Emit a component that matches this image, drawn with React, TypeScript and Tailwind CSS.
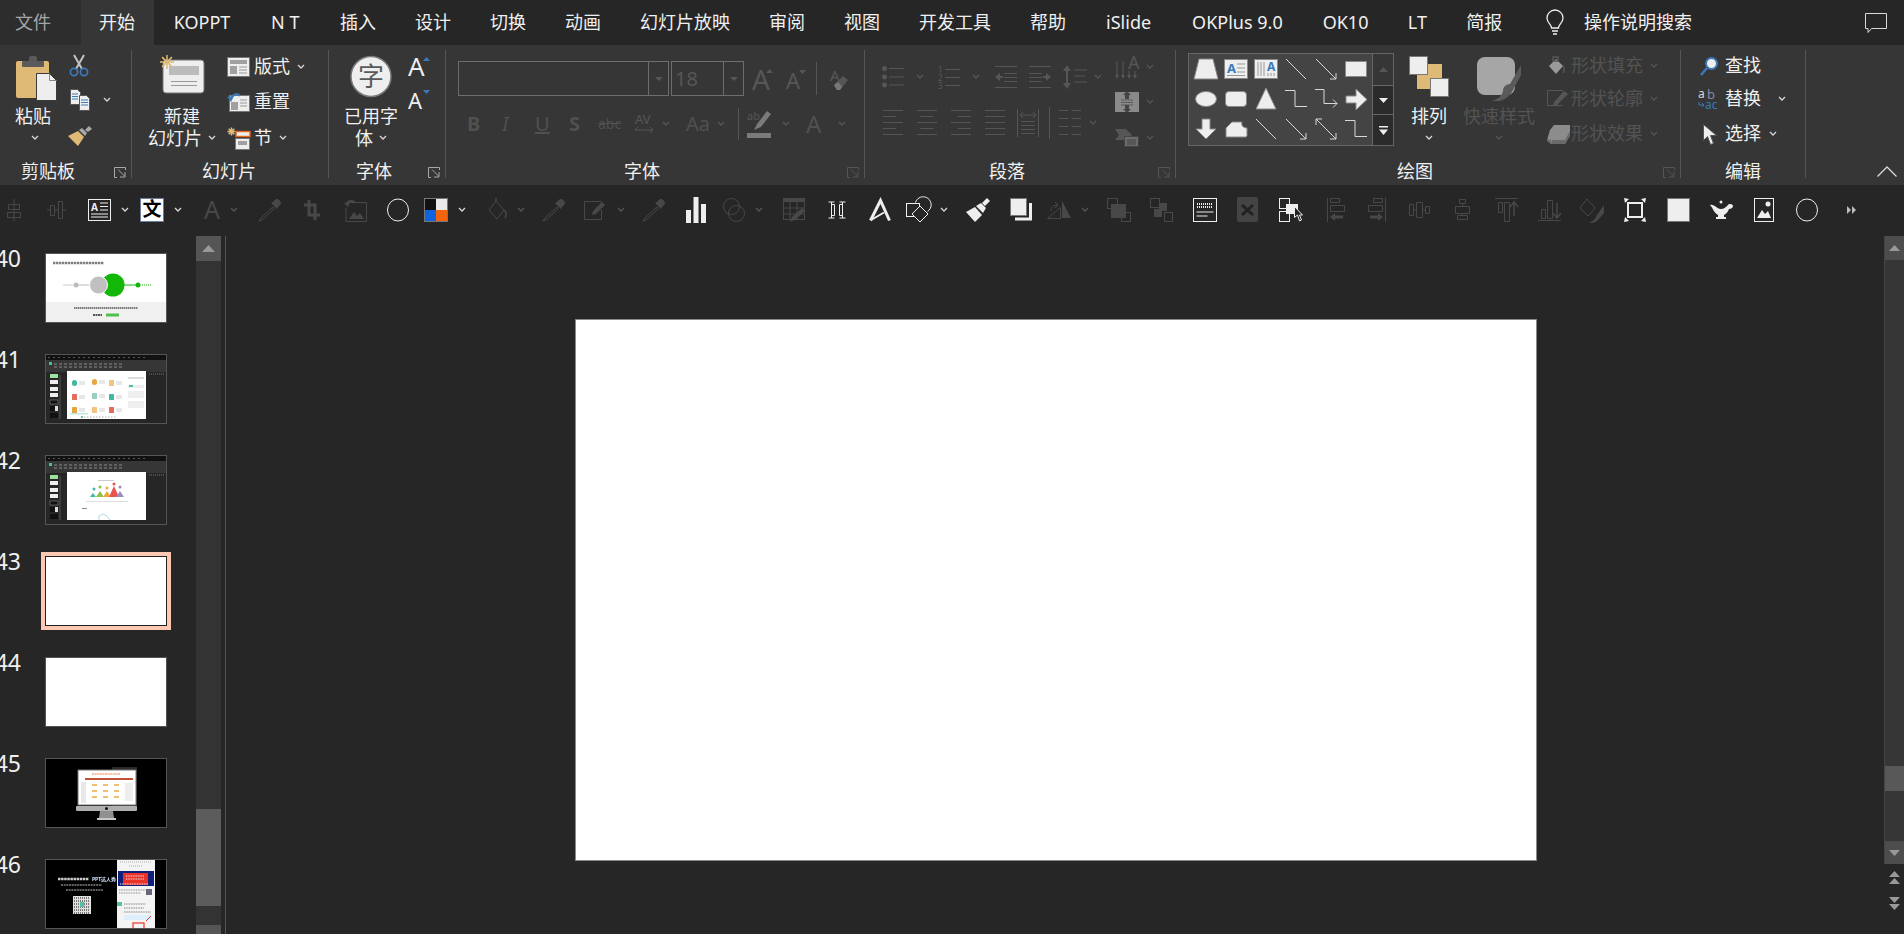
import type { ReactNode } from 'react'

const W = '#eeeeee'
const D = '#565656'
const K = '#484848'
const T = '#dfba76'
const B = '#3a7ab8'

function S({ w, h, children, className }: { w: number; h: number; children: ReactNode; className?: string }) {
  return (
    <svg width={w} height={h} viewBox={`0 0 ${w} ${h}`} fill="none" className={`flex-none overflow-visible ${className ?? ''}`}>
      {children}
    </svg>
  )
}

function Chev({ dim, className }: { dim?: boolean; className?: string }) {
  return (
    <S w={8} h={6} className={className}>
      <path d="M1 1l3 3 3-3" stroke={dim ? D : '#d8d8d8'} strokeWidth="1.3" />
    </S>
  )
}

function Launcher({ dim }: { dim?: boolean }) {
  const c = dim ? '#555555' : '#a8a8a8'
  return (
    <S w={12} h={11} className="absolute right-[5px] top-[117px]">
      <path d="M11.5 3V.5H.5v10H3" stroke={c} />
      <path d="M4 2.5l6.5 6.5M11 5v5H6" stroke={c} />
    </S>
  )
}

function Group({ w, label, labelMl, launcher, dimLauncher, children }: { w: string; label: string; labelMl: string; launcher?: boolean; dimLauncher?: boolean; children: ReactNode }) {
  return (
    <div className={`relative mt-[5px] h-[128px] flex-none border-r border-[#565656] ${w}`}>
      <div className="flex h-[110px]">{children}</div>
      <div className={`h-[22px] text-[18px] leading-[22px] text-[#f0f0f0] ${labelMl}`}>{label}</div>
      {launcher && <Launcher dim={dimLauncher} />}
    </div>
  )
}

function SmallRow({ h, children }: { h: string; children: ReactNode }) {
  return <div className={`flex items-center ${h}`}>{children}</div>
}

function Paste() {
  return (
    <S w={41} h={45}>
      <rect y="5" width="33" height="37" rx="2" fill={T} />
      <rect x="6" y="5" width="22" height="6" rx="1" fill="#5a5a5a" />
      <rect x="13" width="8" height="7" rx="2" fill="#5a5a5a" />
      <path d="M20.5 17.5h13l7 7v20h-20z" fill={W} stroke="#3a3a3a" />
      <path d="M33.5 17.5v7h7" stroke="#888" />
    </S>
  )
}

function Cut() {
  return (
    <S w={20} h={22}>
      <path d="M5 0l8 14M15 0L7 14" stroke="#c4c4c4" strokeWidth="2" />
      <circle cx="5" cy="17" r="3.6" stroke={B} strokeWidth="1.7" />
      <circle cx="15" cy="17" r="3.6" stroke={B} strokeWidth="1.7" />
    </S>
  )
}

function Copy() {
  return (
    <S w={20} h={22}>
      <path d="M.5.5h7l3 3v12H.5z" fill={W} stroke="#555" />
      <path d="M2 5h6M2 7.5h6M2 10h6" stroke={B} />
      <path d="M9.5 6.5h7l3 3v12h-10z" fill={W} stroke="#555" />
      <path d="M11 11h7M11 13.5h7M11 16h7" stroke={B} />
    </S>
  )
}

function Brush() {
  return (
    <S w={24} h={20}>
      <path d="M0 10l10-5 6 6-6 9z" fill={T} />
      <path d="M11 4l6 6 2-3-5-5z" fill="#a8a8a8" />
      <path d="M17 4l4-4 3 3-4 3z" fill="#a8a8a8" />
    </S>
  )
}

function Sun({ cx, cy, r }: { cx: number; cy: number; r: number }) {
  const k = r * 0.7
  return (
    <path
      d={`M${cx - r} ${cy}h${r * 2}M${cx} ${cy - r}v${r * 2}M${cx - k} ${cy - k}l${k * 2} ${k * 2}M${cx + k} ${cy - k}l${-k * 2} ${k * 2}`}
      stroke={T}
      strokeWidth="1.5"
    />
  )
}

function NewSlide() {
  return (
    <S w={47} h={40}>
      <rect x="4" y="6" width="41" height="33" rx="3" fill={W} stroke="#777" />
      <rect x="10" y="12" width="30" height="9" fill="#bbbbbb" />
      <path d="M12 27.5h26M12 31.5h26" stroke="#999" />
      <Sun cx={8} cy={8} r={7} />
    </S>
  )
}

function Layout() {
  return (
    <S w={23} h={20}>
      <rect x=".5" y=".5" width="22" height="19" fill={W} stroke="#777" />
      <rect x="3" y="3" width="17" height="4" fill="#a0a0a0" />
      <rect x="3" y="9" width="7" height="8" fill="#a0a0a0" />
      <path d="M12 10h8M12 13h8M12 16h8" stroke="#999" />
    </S>
  )
}

function Reset() {
  return (
    <S w={24} h={20}>
      <rect x="2.5" y="3.5" width="20" height="16" fill={W} stroke="#777" />
      <rect x="4" y="10" width="7" height="8" fill="#a0a0a0" />
      <path d="M13 8h7M13 11h7M13 14h7" stroke="#999" />
      <path d="M4 6c2-4 7-5 9-2" stroke={B} strokeWidth="2.2" />
      <path d="M0 5l7-1-3 6z" fill={B} />
    </S>
  )
}

function Section() {
  return (
    <S w={23} h={23}>
      <Sun cx={4.5} cy={4.5} r={4} />
      <rect x="9" y="4.5" width="14" height="5" fill={W} stroke="#e8641b" strokeWidth="1.4" />
      <rect x="8.5" y="11.5" width="14" height="11" fill={W} stroke="#777" />
      <rect x="11" y="14" width="9" height="4" fill="#a0a0a0" />
    </S>
  )
}

function FontCircle() {
  return (
    <S w={42} h={41}>
      <ellipse cx="21" cy="20.5" rx="20" ry="20" fill={W} stroke="#7a7a7a" strokeWidth="1.5" />
      <text x="21" y="30" textAnchor="middle" fontSize="26" fill="#5a5a5a">字</text>
    </S>
  )
}

function GrowA({ up, size, color, tri, w = 18, h = 20 }: { up: boolean; size: number; color: string; tri: string; w?: number; h?: number }) {
  return (
    <S w={w} h={h}>
      <text x="0" y={h} fontSize={size} fill={color}>A</text>
      <path d={up ? `M${w - 7} 5l3.5-4 3.5 4z` : `M${w - 7} 1h7l-3.5 4z`} fill={tri} />
    </S>
  )
}

function Eraser() {
  return (
    <S w={19} h={22}>
      <text x="0" y="13" fontSize="15" fill={D}>A</text>
      <path d="M4 17l9-9 5 4-8 10H7z" fill={D} />
      <path d="M4 17l3 5h3l2-3-4-5z" fill="#777" />
    </S>
  )
}

function Combo({ w, children }: { w: string; children?: ReactNode }) {
  return (
    <div className={`flex h-[35px] flex-none border border-[#6d6d6d] ${w}`}>
      <div className="flex-1 pl-[3px] text-[20px] leading-[33px] text-[#565656]">{children}</div>
      <div className="flex w-[20px] items-center justify-center border-l border-[#6d6d6d]">
        <S w={8} h={4}><path d="M0 0h8L4 4z" fill={D} /></S>
      </div>
    </div>
  )
}

function Lines({ w, ys, color = '#555555', x = 0 }: { w: number; ys: number[]; color?: string; x?: number }) {
  return <path d={ys.map(y => `M${x} ${y + 0.5}h${w}`).join('')} stroke={color} />
}

function Bullets() {
  return (
    <S w={22} h={22}>
      <circle cx="2.5" cy="2.5" r="2.5" fill={D} /><circle cx="2.5" cy="11" r="2.5" fill={D} /><circle cx="2.5" cy="19" r="2.5" fill={D} />
      <path d="M7 2.5h15M7 11h15M7 19h15" stroke={D} />
    </S>
  )
}

function Numbering() {
  return (
    <S w={22} h={24}>
      <text x="0" y="8" fontSize="8" fill={D}>1</text><text x="0" y="16" fontSize="8" fill={D}>2</text><text x="0" y="24" fontSize="8" fill={D}>3</text>
      <path d="M7 4.5h15M7 12.5h15M7 20.5h15" stroke={D} />
    </S>
  )
}

function Indent({ flip }: { flip?: boolean }) {
  return (
    <S w={22} h={22} className={flip ? '-scale-x-100' : ''}>
      <path d="M0 .5h22M9 7.5h13M9 11.5h13M9 15.5h13M0 21.5h22" stroke={D} />
      <path d="M0 11l5-4v3h3v2H5v3z" fill={D} />
    </S>
  )
}

function LineSpacing() {
  return (
    <S w={24} h={24}>
      <path d="M4 0L8 6H5v12h3l-4 6-4-6h3V6H0z" fill={D} />
      <path d="M11 5h13M11 11h11M11 17h13" stroke={D} />
    </S>
  )
}

function TextDir() {
  return (
    <S w={24} h={25}>
      <text x="13" y="14" fontSize="18" textAnchor="start" fill={D}>A</text>
      <path d="M2 6v16M8 6v16M14 16v6M20 16v6" stroke={D} />
      <path d="M0 20l2 4 2-4zM6 20l2 4 2-4zM12 20l2 4 2-4zM18 20l2 4 2-4z" fill={D} />
    </S>
  )
}

function AlignTextIcon() {
  return (
    <S w={24} h={22}>
      <rect y="1" width="24" height="20" fill="#8a8a8a" />
      <path d="M6 9h12M6 11.5h12M6 14h12" stroke="#5a5a5a" />
      <path d="M12 0l4 4h-2v4h-4V4H8zM12 22l4-4h-2v-4h-4v4H8z" fill="#444" />
    </S>
  )
}

function SmartArtIcon() {
  return (
    <S w={24} h={18}>
      <path d="M0 0h11l6 6-5 5H0l4-5z" fill={D} />
      <rect x="9.5" y="7.5" width="14" height="10" fill="#6b6b6b" stroke="#444" />
      <path d="M12 11h9M12 13h9M12 15h9" stroke="#444" />
    </S>
  )
}

function ParaAlign({ kind }: { kind: 'l' | 'c' | 'r' | 'j' }) {
  const short = kind === 'j' ? 20 : 13
  const x = kind === 'l' || kind === 'j' ? 0 : kind === 'c' ? 3.5 : 7
  return (
    <S w={20} h={26}>
      <Lines w={20} ys={[0, 12, 24]} />
      <Lines w={short} x={x} ys={[6, 18]} />
    </S>
  )
}

function Distributed() {
  return (
    <S w={22} h={28}>
      <path d="M.5 0v28M21.5 0v28" stroke={D} />
      <path d="M4 12.5h14M4 16.5h14M4 20.5h14M4 24.5h14" stroke={D} />
      <path d="M3 6h16M3 6l3-3M3 6l3 3M19 6l-3-3M19 6l-3 3" stroke={D} />
    </S>
  )
}

function Columns() {
  return (
    <S w={22} h={26}>
      <path d="M0 .5h9M13 .5h9M0 8.5h9M13 8.5h9M0 16.5h9M13 16.5h9M0 24.5h9M13 24.5h9" stroke={D} />
    </S>
  )
}

function Highlighter() {
  return (
    <S w={24} h={28}>
      <text x="0" y="10" fontSize="11" fill={D}>ab</text>
      <path d="M7 20l3-6L20 1l4 3-10 13z" fill="#7a7a7a" />
      <rect y="23" width="24" height="5" fill="#7a7a7a" />
    </S>
  )
}

function GalleryShape({ i }: { i: number }) {
  const l = '#d8d8d8'
  switch (i) {
    case 0: return <S w={24} h={20}><path d="M5 0h14l5 20H0z" fill={W} stroke="#888" /></S>
    case 1: return <S w={24} h={20}><rect x=".5" y=".5" width="23" height="19" fill={W} stroke="#888" /><text x="3" y="14" fontSize="13" fontWeight="700" fill={B}>A</text><path d="M13 5h8M13 9h8M13 13h8M3 16.5h18" stroke="#999" /></S>
    case 2: return <S w={24} h={20}><rect x=".5" y=".5" width="23" height="19" fill={W} stroke="#888" /><text x="13" y="12" fontSize="12" fontWeight="700" fill={B}>A</text><path d="M4 3v14M7 3v14M10 3v14M14 14v3M17 14v3M20 14v3" stroke="#999" /></S>
    case 3: return <S w={22} h={22}><path d="M1 1l20 20" stroke={l} /></S>
    case 4: return <S w={22} h={22}><path d="M1 1l20 20M21 15v6h-6" stroke={l} /></S>
    case 5: return <S w={22} h={16}><rect x=".5" y=".5" width="21" height="15" fill={W} stroke="#888" /></S>
    case 6: return <S w={22} h={16}><ellipse cx="11" cy="8" rx="10.5" ry="7.5" fill={W} stroke="#888" /></S>
    case 7: return <S w={22} h={16}><rect x=".5" y=".5" width="21" height="15" rx="3.5" fill={W} stroke="#888" /></S>
    case 8: return <S w={20} h={22}><path d="M10 0l10 21H0z" fill={W} stroke="#888" /></S>
    case 9: return <S w={22} h={18}><path d="M0 .5h10v16h12" stroke={l} /></S>
    case 10: return <S w={22} h={20}><path d="M0 .5h9v14h13M18 10.5l4 4-4 4" stroke={l} /></S>
    case 11: return <S w={21} h={21}><path d="M0 7h10V0l11 10.5L10 21v-7H0z" fill={W} stroke="#888" /></S>
    case 12: return <S w={20} h={20}><path d="M6 0h8v10h6L10 20 0 10h6z" fill={W} stroke="#888" /></S>
    case 13: return <S w={21} h={15}><path d="M0 15V6l6-6h10c-1 3 1 6 5 6v8l-1 1H1z" fill={W} stroke="#888" /></S>
    case 14: return <S w={20} h={20}><path d="M0 0l20 20" stroke={l} /></S>
    case 15: return <S w={22} h={22}><path d="M1 1l20 20M21 15v6h-6" stroke={l} /></S>
    case 16: return <S w={22} h={22}><path d="M1 1l20 20M21 15v6h-6M1 7V1h6" stroke={l} /></S>
    default: return <S w={22} h={18}><path d="M0 .5h10v16h12" stroke={l} /></S>
  }
}

function Gallery() {
  const shapes = Array.from({ length: 18 }, (_, i) => i)
  return (
    <div className="ml-[12px] mt-[3px] flex h-[93px] flex-none border border-[#666666]">
      <div className="grid h-full w-[183px] grid-cols-[repeat(6,30px)] grid-rows-[repeat(3,30px)] items-center justify-items-center bg-[#444444] px-[2px]">
        {shapes.map(i => <GalleryShape key={i} i={i} />)}
      </div>
      <div className="flex w-[21px] flex-col border-l border-[#666666] bg-[#363636]">
        <div className="flex h-[32px] items-center justify-center border-b border-[#666666]">
          <S w={9} h={5}><path d="M0 5l4.5-5L9 5z" fill="#555" /></S>
        </div>
        <div className="flex h-[29px] items-center justify-center border-b border-[#666666] bg-[#2b2b2b]">
          <S w={9} h={5}><path d="M0 0h9L4.5 5z" fill={W} /></S>
        </div>
        <div className="flex flex-1 items-center justify-center bg-[#2b2b2b]">
          <S w={9} h={9}><path d="M0 0h9v1.5H0zM0 3.5h9L4.5 9z" fill={W} /></S>
        </div>
      </div>
    </div>
  )
}

function Arrange() {
  return (
    <S w={40} h={41}>
      <rect x="19" y="8" width="14" height="14" fill={T} />
      <rect x="8" y="19" width="14" height="14" fill={T} />
      <rect x=".5" y=".5" width="18" height="18" fill={W} stroke="#777" />
      <rect x="21.5" y="22.5" width="18" height="18" fill={W} stroke="#777" />
    </S>
  )
}

function QuickStyle() {
  return (
    <S w={44} h={44}>
      <rect x="0" y="0" width="38" height="38" rx="8" fill="#a6a6a6" />
      <path d="M26 34c0-4 3-7 7-7l11-19v10l-8 15c-3 6-7 9-13 11h-8c6-2 10-5 11-10z" fill="#5a5a5a" />
    </S>
  )
}

function ShapeFill() {
  return (
    <S w={18} h={20}>
      <path d="M2 10l7-7 7 7-7 8z" fill="#9a9a9a" />
      <path d="M6 1h5v4H6zM16 10c2 2 1 5 0 7" stroke={D} strokeWidth="1.500" />
    </S>
  )
}

function ShapeOutline() {
  return (
    <S w={22} h={18}>
      <path d="M16 .5H.5v15h15" stroke={D} />
      <path d="M6 16l1-4L17 1l4 3-11 11z" fill={D} />
    </S>
  )
}

function ShapeEffect() {
  return (
    <S w={23} h={19}>
      <path d="M3 5l4-5h16v10l-5 9H4l-4-4z" fill="#8c8c8c" />
      <path d="M0 14l4 1 1 4H4l-4-3zM5 15h13l5-9v5l-5 8H5z" fill="#6a6a6a" />
    </S>
  )
}

function Find() {
  return (
    <S w={18} h={19}>
      <circle cx="11.5" cy="6.5" r="5.5" fill={W} stroke={B} strokeWidth="2" />
      <path d="M7 11l-6 7" stroke={B} strokeWidth="2.5" />
    </S>
  )
}

function Replace() {
  return (
    <S w={22} h={21}>
      <text x="0" y="9" fontSize="12" fill="#d8d8d8">a</text>
      <text x="9" y="10" fontSize="13" fill="#8888aa">b</text>
      <text x="7" y="20" fontSize="12" fill={B}>ac</text>
      <path d="M1 13v3h5M4 14l2 2-2 2" stroke={B} />
    </S>
  )
}

function Cursor() {
  return (
    <S w={14} h={21}>
      <path d="M.5.5v16l4-4 3 8 3-1-3-8h6z" fill={W} stroke="#555" />
    </S>
  )
}

// toolbar icons
function TAlign() {
  return <S w={14} h={22}><path d="M7 0v22M1.5 5.5h11v5h-11zM.5 13.5h13v5H.5z" stroke={K} /></S>
}
function TDistrib() {
  return <S w={19} h={20}><path d="M0 10h3M16 10h3M3.5 5.5h4v10h-4zM11.5 1.5h4v17h-4zM7.5 10h4" stroke={K} /></S>
}
function TTextBox() {
  return (
    <S w={23} h={22}>
      <rect x=".5" y=".5" width="22" height="21" stroke={W} />
      <text x="3" y="12" fontSize="10" fontWeight="700" fill={W}>A</text>
      <path d="M12 4h8M12 7.5h8M12 11h8M3 15h17M3 18h17" stroke={W} />
    </S>
  )
}
function TBigWen() {
  return (
    <div className="flex h-[24px] w-[24px] flex-none items-center justify-center border border-[#6b7fa0] bg-white text-[19px] font-bold leading-none text-black">文</div>
  )
}
function TDropper() {
  return (
    <S w={23} h={22}>
      <path d="M15 8L3 19l-2 3 3-1 12-11z" stroke={K} />
      <path d="M13 4l6 6 1-2 3-3c0-3-2-5-5-5l-3 3z" fill={K} />
    </S>
  )
}
function TCrop() {
  return <S w={16} h={20}><path d="M5 0v15h11M0 5h11v15" stroke={K} strokeWidth="3" /></S>
}
function TImgRefresh() {
  return (
    <S w={23} h={24}>
      <path d="M6 4.5h16.5v19H2V10" stroke={K} />
      <path d="M5 21l5-7 3 4 3-3 4 6z" fill={K} />
      <path d="M3 6c1-4 6-4 8-1" stroke={K} strokeWidth="2" />
      <path d="M0 5l6-1-2 5z" fill={K} />
    </S>
  )
}
function TCircle() {
  return <S w={22} h={24}><ellipse cx="11" cy="12" rx="10.5" ry="11" stroke={W} /></S>
}
function TColors() {
  return (
    <div className="grid h-[24px] w-[24px] flex-none grid-cols-2 grid-rows-2 border border-[#777777]">
      <div className="bg-[#111111]" /><div className="bg-[#eaeaea]" /><div className="bg-[#0f62e0]" /><div className="bg-[#f5640a]" />
    </div>
  )
}
function TBucket() {
  return <S w={18} h={24}><path d="M7 3l8 9-7 9-8-9z" stroke={K} /><path d="M7 3V0M15 12c2 2 3 5 1 8" stroke={K} strokeWidth="1.5" /></S>
}
function TPencilRect() {
  return <S w={23} h={20}><path d="M17.5 1.5H.5v18h17V10" stroke={K} /><path d="M8 15l1-4 9-9 3 3-9 9z" fill={K} /></S>
}
function TBars() {
  return <S w={20} h={26}><rect y="13" width="5" height="13" fill={W} /><rect x="7.5" width="5" height="26" fill={W} /><rect x="15" y="7" width="5" height="19" fill={W} /></S>
}
function TVenn() {
  return <S w={22} h={26}><circle cx="8.5" cy="9.5" r="8" stroke={K} /><circle cx="13.5" cy="16.5" r="8" stroke={K} /></S>
}
function TTablePen() {
  return (
    <S w={22} h={24}>
      <rect x=".5" y=".5" width="21" height="21" stroke={K} />
      <rect y="0" width="22" height="4" fill={K} />
      <path d="M7 4v18M14 4v18M0 10h22M0 16h22" stroke={K} />
      <path d="M7 24l2-5 10-9 3 3-10 9z" fill={K} />
    </S>
  )
}
function TDistribWhite() {
  return <S w={18} h={18}><path d="M.5 1h6M3.500 1v16M.5 17h6M11.500 1h6M14.500 1v16M11.500 17h6" stroke={W} /><path d="M3.500 3.500h3v11h-3zM11.500 3.500h3v11h-3z" stroke={W} /></S>
}
function TBigA() {
  return (
    <S w={22} h={22}>
      <path d="M1.500 21.500L11.500 1.500L20.500 21.500" stroke={W} strokeWidth="3" />
      <path d="M2 21L15 13.500" stroke={W} strokeWidth="2" />
    </S>
  )
}
function TShapes() {
  return (
    <S w={24} h={24}>
      <path d="M9.500 4.500a8 8 0 1 1 12 9" stroke={W} />
      <rect x=".5" y="5.500" width="13" height="13" stroke={W} fill="#262626" />
      <path d="M14 8l8 8-8 8-8-8z" stroke={W} fill="#262626" />
    </S>
  )
}
function TBrushWhite() {
  return <S w={24} h={24}><path d="M0 14l9-5 7 8-7 7z" fill={W} /><path d="M10 8l7 7 3-5-5-5z" fill={W} /><path d="M16 5l5-5 3 3-5 5z" fill={W} /></S>
}
function TCopies() {
  return <S w={22} h={23}><rect x=".5" y=".5" width="16" height="17" fill={W} stroke="#777" /><path d="M20.500 5v16H5" stroke={W} strokeWidth="3" /></S>
}
function TTriangle() {
  return (
    <S w={24} h={18}>
      <path d="M15 0l9 17h-9z" fill={K} />
      <path d="M13.500 6.500L.5 17.500h13zM4 10c0-4 3-6 6-6M8 1l3 3-3 3" stroke={K} />
    </S>
  )
}
function TGroupA() {
  return <S w={24} h={24}><rect x=".5" y=".5" width="10" height="10" stroke={K} /><rect x="4" y="6" width="15" height="14" fill={K} /><rect x="14.5" y="14.5" width="9" height="9" stroke={K} /></S>
}
function TGroupB() {
  return <S w={23} h={24}><rect x=".5" y=".5" width="9" height="9" stroke={K} /><rect x="9" y="5" width="8" height="8" fill={K} /><rect x="4" y="11" width="8" height="8" fill={K} /><rect x="14.5" y="14.5" width="8" height="9" stroke={K} /></S>
}
function TDots() {
  return (
    <S w={24} h={24}>
      <rect x=".5" y=".5" width="23" height="23" stroke={W} />
      <path d="M4 6h16" stroke={W} strokeWidth="2" strokeDasharray="1 1" />
      <path d="M4 9h16" stroke={W} strokeWidth="2" strokeDasharray="1 1" />
      <path d="M3.5 14h17M3.5 18h11" stroke={W} />
    </S>
  )
}
function TCross() {
  return (
    <div className="flex h-[25px] w-[21px] flex-none items-center justify-center rounded-[2px] bg-[#444444]">
      <S w={13} h={12}><path d="M1 1l11 10M12 1L1 11" stroke="#222222" strokeWidth="3" /></S>
    </div>
  )
}
function TSelect() {
  return (
    <div className="relative h-[24px] w-[23px] flex-none">
      <S w={23} h={24}>
        <rect x=".5" y=".5" width="10" height="10" stroke={W} />
        <rect x=".5" y="13.500" width="10" height="10" stroke={W} />
        <rect x="7" y="6" width="12" height="10" fill={W} />
      </S>
      <div className="absolute left-[15px] top-[8px]"><S w={9} h={16}><path d="M.5.5v11l3-2.500 2 6 2-1-2-5h3z" fill="#222222" stroke={W} /></S></div>
    </div>
  )
}
function TAlignSide({ flip }: { flip?: boolean }) {
  return (
    <S w={18} h={24} className={flip ? '-scale-x-100' : ''}>
      <path d="M.5 0v24M3.500.5h9v4h-9zM3.500 7.500h14v6h-14z" stroke={K} />
      <path d="M3 19l5-4v2.500h8v3H8V23z" fill={K} />
    </S>
  )
}
function TDistH() {
  return <S w={21} h={16}><path d="M.5 2.500h4v11h-4zM7.500.5h6v15h-6zM16.500 4.500h4v7h-4zM4.500 8h3M13.500 8h3" stroke={K} /></S>
}
function TAlignMid() {
  return <S w={15} h={21}><path d="M7.500 5v3M7.500 15v2M4.500.5h6v4h-6zM.5 7.500h14v7H.5zM2.500 16.500h10v4h-10z" stroke={K} /></S>
}
function TTopArrow() {
  return <S w={23} h={24}><path d="M0 .5h23M3.500 4.500h4v10h-4zM9.500 4.500h5v19h-5z" stroke={K} /><path d="M19 18V5M15 9l4-5 4 5" stroke={K} strokeWidth="1.500" /></S>
}
function TBottomArrow() {
  return <S w={23} h={22}><path d="M0 21.500h23M3.500 10.500h4v9h-4zM9.500 1.500h5v18h-5z" stroke={K} /><path d="M19 4v14M15 14l4 5 4-5" stroke={K} strokeWidth="1.500" /></S>
}
function TPaintStyle() {
  return <S w={24} h={27}><path d="M7 3l8 9-7 8-8-8z" stroke={K} /><path d="M9 27l5-3 3-5 7-10v8l-6 7c-3 3-6 3-9 3z" fill={K} /></S>
}
function TFrame() {
  return (
    <S w={22} h={24}>
      <rect x="4" y="5" width="14" height="14" stroke={W} strokeWidth="2" />
      <path d="M0 0l5 1-4 4zM22 0l-5 1 4 4zM0 24l5-1-4-4zM22 24l-5-1 4-4z" fill={W} />
    </S>
  )
}
function TLamp() {
  return <S w={23} h={20}><path d="M0 5c5-1 6 4 11 4 3 0 5-2 7-4 1-2 5-1 5 1s-2 3-4 3c-1 3-3 5-5 6v2h2v2H6v-2h2v-2C4 13 3 8 0 5z" fill={W} /><circle cx="11" cy="2" r="1.5" fill={W} /></S>
}
function TPicture() {
  return (
    <S w={20} h={24}>
      <rect x=".5" y=".5" width="19" height="23" stroke={W} />
      <path d="M3 20l5-8 3 4 3-3 3 7z" fill={W} />
      <circle cx="14" cy="6" r="2.5" fill={W} />
    </S>
  )
}

function Cell({ w, children, chev, dim }: { w: string; children: ReactNode; chev?: boolean; dim?: boolean }) {
  return (
    <div className={`flex flex-none items-center ${w}`}>
      {children}
      {chev && <Chev dim={dim} className="ml-[10px]" />}
    </div>
  )
}

function Toolbar() {
  return (
    <div className="flex h-[49px] items-center pl-[7px]">
      <Cell w="w-[40px]"><TAlign /></Cell>
      <Cell w="w-[41px]"><TDistrib /></Cell>
      <Cell w="w-[52px]" chev><TTextBox /></Cell>
      <Cell w="w-[64px]" chev><TBigWen /></Cell>
      <Cell w="w-[54px]" chev dim><span className="w-[16px] text-[25px] leading-none text-[#484848]">A</span></Cell>
      <Cell w="w-[46px]"><TDropper /></Cell>
      <Cell w="w-[40px]"><TCrop /></Cell>
      <Cell w="w-[43px]"><TImgRefresh /></Cell>
      <Cell w="w-[37px]"><TCircle /></Cell>
      <Cell w="w-[65px]" chev><TColors /></Cell>
      <Cell w="w-[53px]" chev dim><TBucket /></Cell>
      <Cell w="w-[42px]"><TDropper /></Cell>
      <Cell w="w-[58px]" chev dim><TPencilRect /></Cell>
      <Cell w="w-[44px]"><TDropper /></Cell>
      <Cell w="w-[37px]"><TBars /></Cell>
      <Cell w="w-[60px]" chev dim><TVenn /></Cell>
      <Cell w="w-[45px]"><TTablePen /></Cell>
      <Cell w="w-[41px]"><TDistribWhite /></Cell>
      <Cell w="w-[37px]"><TBigA /></Cell>
      <Cell w="w-[60px]" chev><TShapes /></Cell>
      <Cell w="w-[44px]"><TBrushWhite /></Cell>
      <Cell w="w-[37px]"><TCopies /></Cell>
      <Cell w="w-[60px]" chev dim><TTriangle /></Cell>
      <Cell w="w-[43px]"><TGroupA /></Cell>
      <Cell w="w-[43px]"><TGroupB /></Cell>
      <Cell w="w-[44px]"><TDots /></Cell>
      <Cell w="w-[42px]"><TCross /></Cell>
      <Cell w="w-[48px]"><TSelect /></Cell>
      <Cell w="w-[41px]"><TAlignSide /></Cell>
      <Cell w="w-[41px]"><TAlignSide flip /></Cell>
      <Cell w="w-[46px]"><TDistH /></Cell>
      <Cell w="w-[40px]"><TAlignMid /></Cell>
      <Cell w="w-[43px]"><TTopArrow /></Cell>
      <Cell w="w-[42px]"><TBottomArrow /></Cell>
      <Cell w="w-[44px]"><TPaintStyle /></Cell>
      <Cell w="w-[43px]"><TFrame /></Cell>
      <Cell w="w-[43px]"><div className="h-[24px] w-[23px] border border-[#777777] bg-[#eeeeee]" /></Cell>
      <Cell w="w-[44px]"><TLamp /></Cell>
      <Cell w="w-[42px]"><TPicture /></Cell>
      <Cell w="w-[51px]"><TCircle /></Cell>
      <Cell w="w-[10px]">
        <S w={10} h={8}><path d="M0 0l4 4-4 4zM5 0l4 4-4 4z" fill="#bbbbbb" /></S>
      </Cell>
    </div>
  )
}

const TABS: [string, string][] = [
  ['KOPPT', 'px-[19.7px]'],
  ['N T', 'px-[21px]'],
  ['插入', 'px-[19.5px]'],
  ['设计', 'px-[19.5px]'],
  ['切换', 'px-[19.5px]'],
  ['动画', 'px-[19.5px]'],
  ['幻灯片放映', 'px-[19.5px]'],
  ['审阅', 'px-[19.5px]'],
  ['视图', 'px-[19.5px]'],
  ['开发工具', 'px-[19.5px]'],
  ['帮助', 'px-[19.5px]'],
  ['iSlide', 'px-[20.7px]'],
  ['OKPlus 9.0', 'px-[20.3px]'],
  ['OK10', 'px-[19.7px]'],
  ['LT', 'px-[19.7px]'],
  ['简报', 'px-[19.7px]'],
]

function TabBar() {
  return (
    <div className="flex h-[45px] items-center text-[18px] text-[#f0f0f0]">
      <div className="flex h-full w-[81px] items-center bg-[#2d2d2d] pl-[15px] text-[#a6a6a6]">文件</div>
      <div className="flex h-full w-[73px] items-center bg-[#363636] pl-[18px]">开始</div>
      {TABS.map(([t, c]) => (
        <div key={t} className={c}>{t}</div>
      ))}
      <S w={18} h={24} className="ml-[24px]">
        <path d="M5.500 17c0-4-4.500-5-4.500-10a8 8 0 0 1 16 0c0 5-4.500 6-4.500 10z" stroke={W} strokeWidth="1.300" />
        <path d="M6 20h6M7 23h4" stroke={W} strokeWidth="1.500" />
      </S>
      <span className="ml-[20px]">操作说明搜索</span>
      <div className="flex flex-1 justify-end pr-[17px]">
        <S w={22} h={20}>
          <path d="M.5.5h21v15H6.500L3 19.500v-4H.5z" stroke="#d8d8d8" />
        </S>
      </div>
    </div>
  )
}

function Ribbon() {
  const txt = 'mb-[3px] text-[18px] leading-none text-[#f0f0f0]'
  const dimTxt = 'mb-[2px] text-[18px] leading-none text-[#535353]'
  return (
    <div className="flex h-[140px] bg-[#363636]">
      <Group w="w-[132px]" label="剪贴板" labelMl="ml-[21px]" launcher>
        <div className="ml-[12px] flex w-[42px] flex-none flex-col items-center">
          <div className="ml-[4px] mt-[6px] h-[45px] self-start"><Paste /></div>
          <div className="mt-[4px] h-[22px] text-[18px] leading-[22px] text-[#f0f0f0]">粘贴</div>
          <div className="ml-[4px] flex h-[22px] items-center"><Chev /></div>
        </div>
        <div className="ml-[14px] flex flex-none flex-col">
          <SmallRow h="h-[32px]"><div className="ml-[1px]"><Cut /></div></SmallRow>
          <SmallRow h="h-[36px]"><div className="ml-[2px]"><Copy /></div><Chev className="ml-[13px]" /></SmallRow>
          <SmallRow h="h-[36px]"><Brush /></SmallRow>
        </div>
      </Group>

      <Group w="w-[197px]" label="幻灯片" labelMl="ml-[70px]">
        <div className="ml-[15px] flex w-[70px] flex-none flex-col items-center">
          <div className="mt-[4px] h-[40px]"><NewSlide /></div>
          <div className="mt-[11px] h-[22px] text-[18px] leading-[22px] text-[#f0f0f0]">新建</div>
          <div className="flex h-[22px] items-center text-[18px] leading-[22px] text-[#f0f0f0]">幻灯片<Chev className="ml-[6px]" /></div>
        </div>
        <div className="ml-[10px] flex flex-none flex-col">
          <SmallRow h="h-[34px]"><Layout /><span className={`ml-[4px] ${txt}`}>版式</span><Chev className="ml-[7px]" /></SmallRow>
          <SmallRow h="h-[36px]"><Reset /><span className={`ml-[3px] ${txt}`}>重置</span></SmallRow>
          <SmallRow h="h-[36px]"><Section /><span className={`ml-[4px] ${txt}`}>节</span><Chev className="ml-[7px]" /></SmallRow>
        </div>
      </Group>

      <Group w="w-[117px]" label="字体" labelMl="ml-[27px]" launcher>
        <div className="ml-[11px] flex w-[62px] flex-none flex-col items-center">
          <div className="mt-[6px] h-[41px]"><FontCircle /></div>
          <div className="mt-[8px] h-[22px] text-[18px] leading-[22px] text-[#f0f0f0]">已用字</div>
          <div className="flex h-[22px] items-center text-[18px] leading-[22px] text-[#f0f0f0]">体<Chev className="ml-[6px]" /></div>
        </div>
        <div className="ml-[6px] flex flex-col">
          <div className="mt-[6px]"><GrowA up size={26} color={W} tri={B} w={22} /></div>
          <div className="mt-[13px]"><GrowA up={false} size={22} color={W} tri={B} w={22} h={20} /></div>
        </div>
      </Group>

      <Group w="w-[419px]" label="字体" labelMl="ml-[178px]" launcher dimLauncher>
        <div className="flex flex-col">
          <div className="ml-[12px] mt-[11px] flex h-[35px] items-center">
            <Combo w="w-[211px]" />
            <Combo w="ml-[2px] w-[73px]">18</Combo>
            <div className="ml-[8px]"><GrowA up size={28} color="#565656" tri="#565656" w={21} h={22} /></div>
            <div className="ml-[13px]"><GrowA up={false} size={22} color="#565656" tri="#565656" w={20} h={20} /></div>
            <div className="ml-[10px] h-[33px] w-px bg-[#565656]" />
            <div className="ml-[13px]"><Eraser /></div>
          </div>
          <div className="mt-[13px] flex h-[30px] items-center text-[#505050]">
            <span className="ml-[21px] w-[13px] text-[20px] font-bold leading-none">B</span>
            <span className="ml-[22px] w-[10px] text-[20px] italic leading-none">I</span>
            <span className="ml-[23px] w-[13px] text-[20px] leading-none underline">U</span>
            <span className="ml-[21px] w-[13px] text-[20px] font-bold leading-none">S</span>
            <span className="ml-[16px] w-[24px] text-[14px] leading-none line-through">abc</span>
            <div className="ml-[13px] w-[19px]">
              <S w={19} h={22}>
                <text x="0" y="11" fontSize="13" fill={D}>AV</text>
                <path d="M0 17h18M15 14l3 3-3 3M0 17l3-3" stroke={D} />
              </S>
            </div>
            <Chev dim className="ml-[8px]" />
            <span className="ml-[16px] w-[24px] text-[20px] leading-none">Aa</span>
            <Chev dim className="ml-[7px]" />
            <div className="ml-[13px] h-[32px] w-px bg-[#565656]" />
            <div className="ml-[8px]"><Highlighter /></div>
            <Chev dim className="ml-[11px]" />
            <span className="ml-[16px] w-[16px] text-[24px] leading-none">A</span>
            <Chev dim className="ml-[16px]" />
          </div>
        </div>
      </Group>

      <Group w="w-[311px]" label="段落" labelMl="ml-[124px]" launcher dimLauncher>
        <div className="flex w-[250px] flex-none flex-col">
          <div className="mt-[12px] flex h-[30px] items-center">
            <div className="ml-[17px]"><Bullets /></div>
            <Chev dim className="ml-[12px]" />
            <div className="ml-[14px]"><Numbering /></div>
            <Chev dim className="ml-[12px]" />
            <div className="ml-[15px]"><Indent /></div>
            <div className="ml-[12px]"><Indent flip /></div>
            <div className="ml-[12px]"><LineSpacing /></div>
            <Chev dim className="ml-[7px]" />
          </div>
          <div className="mt-[16px] flex h-[30px] items-center">
            <div className="ml-[18px]"><ParaAlign kind="l" /></div>
            <div className="ml-[14px]"><ParaAlign kind="c" /></div>
            <div className="ml-[14px]"><ParaAlign kind="r" /></div>
            <div className="ml-[14px]"><ParaAlign kind="j" /></div>
            <div className="ml-[12px]"><Distributed /></div>
            <div className="ml-[10px] h-[32px] w-px bg-[#565656]" />
            <div className="ml-[9px]"><Columns /></div>
            <Chev dim className="ml-[8px]" />
          </div>
        </div>
        <div className="flex flex-none flex-col">
          <SmallRow h="h-[34px]"><TextDir /><Chev dim className="ml-[7px]" /></SmallRow>
          <SmallRow h="h-[36px]"><AlignTextIcon /><Chev dim className="ml-[7px]" /></SmallRow>
          <SmallRow h="h-[36px]"><SmartArtIcon /><Chev dim className="ml-[7px]" /></SmallRow>
        </div>
      </Group>

      <Group w="w-[505px]" label="绘图" labelMl="ml-[221px]" launcher dimLauncher>
        <Gallery />
        <div className="ml-[13px] flex w-[44px] flex-none flex-col items-center">
          <div className="mt-[6px] h-[41px]"><Arrange /></div>
          <div className="mt-[8px] h-[22px] text-[18px] leading-[22px] text-[#f0f0f0]">排列</div>
          <div className="flex h-[22px] items-center"><Chev /></div>
        </div>
        <div className="ml-[12px] flex w-[72px] flex-none flex-col items-center">
          <div className="mt-[7px] h-[44px]"><QuickStyle /></div>
          <div className="mt-[4px] h-[22px] text-[18px] leading-[22px] text-[#535353]">快速样式</div>
          <div className="flex h-[22px] items-center"><Chev dim /></div>
        </div>
        <div className="ml-[12px] flex flex-none flex-col">
          <SmallRow h="h-[32px]"><div className="w-[24px]"><ShapeFill /></div><span className={dimTxt}>形状填充</span><Chev dim className="ml-[7px]" /></SmallRow>
          <SmallRow h="h-[34px]"><div className="w-[24px]"><ShapeOutline /></div><span className={dimTxt}>形状轮廓</span><Chev dim className="ml-[7px]" /></SmallRow>
          <SmallRow h="h-[36px]"><div className="w-[24px]"><ShapeEffect /></div><span className={dimTxt}>形状效果</span><Chev dim className="ml-[7px]" /></SmallRow>
        </div>
      </Group>

      <Group w="w-[125px]" label="编辑" labelMl="ml-[44px]">
        <div className="ml-[17px] flex flex-none flex-col">
          <SmallRow h="h-[32px]"><div className="w-[27px] pl-[2px]"><Find /></div><span className={txt}>查找</span></SmallRow>
          <SmallRow h="h-[34px]"><div className="w-[27px]"><Replace /></div><span className={txt}>替换</span><Chev className="ml-[17px]" /></SmallRow>
          <SmallRow h="h-[36px]"><div className="w-[27px] pl-[5px]"><Cursor /></div><span className={txt}>选择</span><Chev className="ml-[8px]" /></SmallRow>
        </div>
      </Group>

      <div className="flex flex-1 items-end justify-end pb-[8px] pr-[7px]">
        <S w={20} h={11}><path d="M.5 10.500L10 1l9.500 9.500" stroke="#d8d8d8" strokeWidth="1.300" /></S>
      </div>
    </div>
  )
}

function Tiny({ x, y, w, c = '#555' }: { x: number; y: number; w: number; c?: string }) {
  return <rect x={x} y={y} width={w} height="1" fill={c} />
}

function Thumb40() {
  return (
    <S w={120} h={68} className="bg-white blur-[0.4px]">
      <path d="M7 9h51" stroke="#555" strokeWidth="2.400" strokeDasharray="2.400 .6" opacity=".75" />
      <path d="M17 31h10" stroke="#ccc" />
      <path d="M29 31h24" stroke="#bbb" />
      <circle cx="30" cy="31" r="2.500" fill="#bbb" />
      <circle cx="67" cy="31" r="11.500" fill="#13b707" />
      <circle cx="52.500" cy="31" r="9" fill="#c0c0c0" stroke="#fff" />
      <path d="M78 31h15" stroke="#13b707" />
      <circle cx="92" cy="31" r="2.500" fill="#13b707" />
      <path d="M96 31h10" stroke="#13b707" strokeDasharray="1 1" />
      <rect y="48" width="120" height="20" fill="#f0f0f0" />
      <path d="M28 54h64" stroke="#555" strokeWidth="1.400" strokeDasharray="1.500 .5" />
      <path d="M47 61h9" stroke="#555" strokeWidth="2" strokeDasharray="2 .5" />
      <path d="M60 61h13" stroke="#4fc04a" strokeWidth="3" />
    </S>
  )
}

function MiniWindow({ children }: { children: ReactNode }) {
  return (
    <S w={120} h={68} className="bg-[#262626] blur-[0.4px]">
      <rect width="120" height="5" fill="#111" />
      <path d="M2 2.500h100" stroke="#888" strokeWidth=".6" strokeDasharray="2 3" />
      <rect y="5" width="120" height="12" fill="#363636" />
      <path d="M8 9h70M8 12h70" stroke="#8a8a8a" strokeWidth="1" strokeDasharray="3 2" />
      <rect x="3" y="7" width="3" height="3" fill="#3fc0a0" />
      {[21, 27, 34, 40].map(y => <rect key={y} x="4" y={y - 2} width="8" height="4" fill={y === 21 ? '#9be39b' : '#eee'} />)}
      <rect x="4" y="45" width="8" height="4" fill="#111" stroke="#999" strokeWidth=".5" />
      <rect x="4" y="51" width="8" height="5" fill="#111" /><rect x="9" y="51" width="3" height="5" fill="#ddd" />
      <rect x="4" y="58" width="8" height="5" fill="#111" />
      <path d="M14 20v44" stroke="#555" />
      <path d="M103 19h15" stroke="#999" strokeWidth=".7" strokeDasharray="1 1" />
      <rect x="21" y="16" width="79" height="48" fill="#fff" />
      {children}
    </S>
  )
}

function Thumb41() {
  const cols = ['#3fb9a5', '#e7a63f', '#f1c57f', '#e66a5d', '#9ad0c0']
  return (
    <MiniWindow>
      {[[26, 27], [46, 26], [63, 27], [26, 41], [46, 40], [63, 41], [26, 54], [46, 54], [63, 54]].map(([x, y], i) => (
        <g key={i}>
          <rect x={x} y={y - 2} width="5" height="6" rx={i < 2 ? 2.500 : .5} fill={cols[i % 5]} />
          <path d={`M${x + 7} ${y}h6M${x + 7} ${y + 2}h6`} stroke="#bbb" strokeWidth=".7" />
        </g>
      ))}
      <rect x="82" y="22" width="16" height="2" fill="#ddd" />
      <rect x="82" y="30" width="16" height="3" fill="#eee" />
      <rect x="82" y="36" width="16" height="7" fill="#eee" />
      <rect x="82" y="46" width="16" height="7" fill="#eee" />
      <rect x="83" y="30" width="4" height="2" fill="#4cc0ad" />
      <rect x="24" y="58" width="18" height="1.500" fill="#c0e8e0" />
      <path d="M35 62h35" stroke="#aaa" strokeDasharray="1.500 1.500" />
      <circle cx="36" cy="62" r="1" fill="#3fb9a5" />
    </MiniWindow>
  )
}

function Thumb42() {
  return (
    <MiniWindow>
      <path d="M44 41l3-4 3 4z" fill="#3fb9a5" />
      <path d="M50 41l4-6 4 6z" fill="#8bc34a" />
      <path d="M57 41l4-6 4 6z" fill="#f0a63f" />
      <path d="M63 41l5-11 5 11z" fill="#e9534f" />
      <path d="M70 41l4-6 4 6z" fill="#a08bbd" />
      <circle cx="48" cy="33" r="1.500" fill="#3fb9a5" /><circle cx="54" cy="31" r="1.500" fill="#8bc34a" />
      <circle cx="61" cy="32" r="1.500" fill="#f0a63f" /><circle cx="68" cy="28" r="1.500" fill="#e9534f" />
      <circle cx="74" cy="31" r="1.500" fill="#a08bbd" />
      <Tiny x={52} y={24} w={16} c="#ccc" />
      <Tiny x={40} y={45} w={42} c="#ddd" />
      <Tiny x={36} y={52} w={5} c="#888" />
      <path d="M53 64v-4l4-2 4 2 3 4" stroke="#8bd" strokeWidth=".6" />
    </MiniWindow>
  )
}

function Thumb45() {
  return (
    <S w={120} h={68} className="bg-black blur-[0.4px]">
      <rect x="66" y="8" width="25" height="40" fill="#2a2a2a" />
      <rect x="32" y="11" width="58" height="35" fill="#fff" stroke="#777" />
      <path d="M46 15h28" stroke="#f08040" strokeWidth="1.200" strokeDasharray="2 .6" />
      <rect x="39" y="19" width="48" height="2" fill="#c0523a" />
      {[46, 57, 68].map(x => [25, 31, 37].map(y => <rect key={x + '-' + y} x={x} y={y} width="5" height="2" fill={y % 2 ? '#f0c070' : '#c8d8c0'} />))}
      <rect x="79" y="24" width="8" height="18" fill="#eeeeee" />
      <rect x="35" y="23" width="5" height="21" fill="#e8e8e8" />
      <rect x="30" y="47" width="61" height="5" rx="1" fill="#b0b0b0" />
      <circle cx="60.500" cy="49.500" r="1.500" fill="#111" />
      <path d="M54 52h13l1 7H53z" fill="#909090" />
      <rect x="51" y="59" width="19" height="2" fill="#c8c8c8" />
    </S>
  )
}

function Thumb46() {
  return (
    <S w={120} h={68} className="bg-black blur-[0.3px]">
      <path d="M12 19h31" stroke="#ccc" strokeWidth="2.500" strokeDasharray="2.500 .6" />
      <text x="46" y="21" fontSize="5" fontWeight="700" fill="#cfe4ff">PPT达人秀</text>
      <path d="M15 25h41M20 30h37" stroke="#bbb" strokeWidth="1.200" strokeDasharray="2 .7" />
      <rect x="27" y="36" width="18" height="18" fill="#e0e0e0" />
      <path d="M28 38h16M28 41h16M28 44h16M28 47h16M28 50h16M28 53h16" stroke="#555" strokeWidth="1.300" strokeDasharray="1 1" />
      <rect x="34" y="42" width="4" height="5" fill="#53c0a8" />
      <rect x="71" width="38" height="68" fill="#f4f4f4" />
      <path d="M74 2h32M83 6h14" stroke="#aaa" strokeDasharray="1 1" />
      <rect x="72" y="11" width="36" height="15" fill="#10207a" />
      <rect x="77" y="13" width="25" height="12" fill="#e8322a" />
      <path d="M80 16h18M80 19h18M74 24h28" stroke="#f0f0f0" strokeDasharray="1 .7" />
      <path d="M73 30h28M73 33h22" stroke="#888" strokeDasharray="1 .7" />
      <rect x="100" y="29" width="6" height="6" fill="#667" />
      <rect x="71" y="42" width="5" height="4" fill="#53c0a8" />
      <path d="M78 44h22M78 48h20M78 52h27" stroke="#777" strokeDasharray="1 .7" />
      <rect x="78" y="55" width="27" height="5" fill="#dfeefb" />
      <path d="M100 61l5-5" stroke="#e8322a" />
      <rect x="87" y="63" width="11" height="6" fill="none" stroke="#e8322a" strokeWidth="1.200" />
    </S>
  )
}

function ThumbRow({ n, selected, children }: { n: number; selected?: boolean; children?: ReactNode }) {
  return (
    <div className="flex h-[101px] flex-none items-start">
      <div className="-mt-[10px] flex h-[30px] w-[21px] flex-none items-center justify-end overflow-hidden text-[23px] leading-none text-[#f0f0f0]">
        <span className="flex-none">{n}</span>
      </div>
      <div className={`ml-[24px] h-[70px] w-[122px] flex-none overflow-hidden border bg-white ${selected ? 'border-[#222222] outline-4 outline-[#fcc8b3]' : 'border-[#555555]'}`}>
        {children}
      </div>
    </div>
  )
}

function SideScroll() {
  return (
    <div className="flex h-full w-[25px] flex-none flex-col bg-[#333333]">
      <div className="flex h-[25px] flex-none items-center justify-center bg-[#555555]">
        <S w={13} h={7}><path d="M0 7l6.500-7L13 7z" fill="#999999" /></S>
      </div>
      <div className="mt-[548px] h-[97px] flex-none bg-[#5c5c5c]" />
      <div className="mt-[19px] flex-1 bg-[#555555]" />
    </div>
  )
}

function MainScroll() {
  return (
    <div className="flex w-[20px] flex-none flex-col">
      <div className="flex h-[628px] flex-none flex-col border-l border-[#444444] bg-[#363636]">
        <div className="flex h-[24px] flex-none items-center justify-center bg-[#4d4d4d]">
          <S w={11} h={6}><path d="M0 6l5.500-6L11 6z" fill="#999999" /></S>
        </div>
        <div className="mt-[506px] h-[25px] flex-none bg-[#585858]" />
        <div className="mt-[50px] flex h-[23px] flex-none items-center justify-center bg-[#4d4d4d]">
          <S w={11} h={6}><path d="M0 0h11L5.500 6z" fill="#999999" /></S>
        </div>
      </div>
      <div className="mt-[7px] flex justify-center">
        <S w={11} h={13}><path d="M0 6l5.500-6L11 6zM0 13l5.500-6L11 13z" fill="#999999" /></S>
      </div>
      <div className="mt-[13px] flex justify-center">
        <S w={11} h={13}><path d="M0 0h11L5.500 6zM0 7h11l-5.500 6z" fill="#999999" /></S>
      </div>
    </div>
  )
}

export default function App() {
  return (
    <div className="h-[934px] w-[1904px] overflow-hidden bg-[#262626] font-['Noto_Sans','Noto_Sans_CJK_SC',sans-serif]">
      <TabBar />
      <Ribbon />
      <Toolbar />
      <div className="flex h-[700px] pt-[2px]">
        <div className="flex w-[196px] flex-none flex-col overflow-hidden pt-[17px]">
          <ThumbRow n={40}><Thumb40 /></ThumbRow>
          <ThumbRow n={41}><Thumb41 /></ThumbRow>
          <ThumbRow n={42}><Thumb42 /></ThumbRow>
          <ThumbRow n={43} selected />
          <ThumbRow n={44} />
          <ThumbRow n={45}><Thumb45 /></ThumbRow>
          <ThumbRow n={46}><Thumb46 /></ThumbRow>
        </div>
        <SideScroll />
        <div className="ml-[4px] h-full w-px flex-none bg-[#555555]" />
        <div className="flex-1 pl-[349px] pt-[83px]">
          <div className="h-[542px] w-[962px] border border-[#8a8a8a] bg-white" />
        </div>
        <MainScroll />
      </div>
    </div>
  )
}
